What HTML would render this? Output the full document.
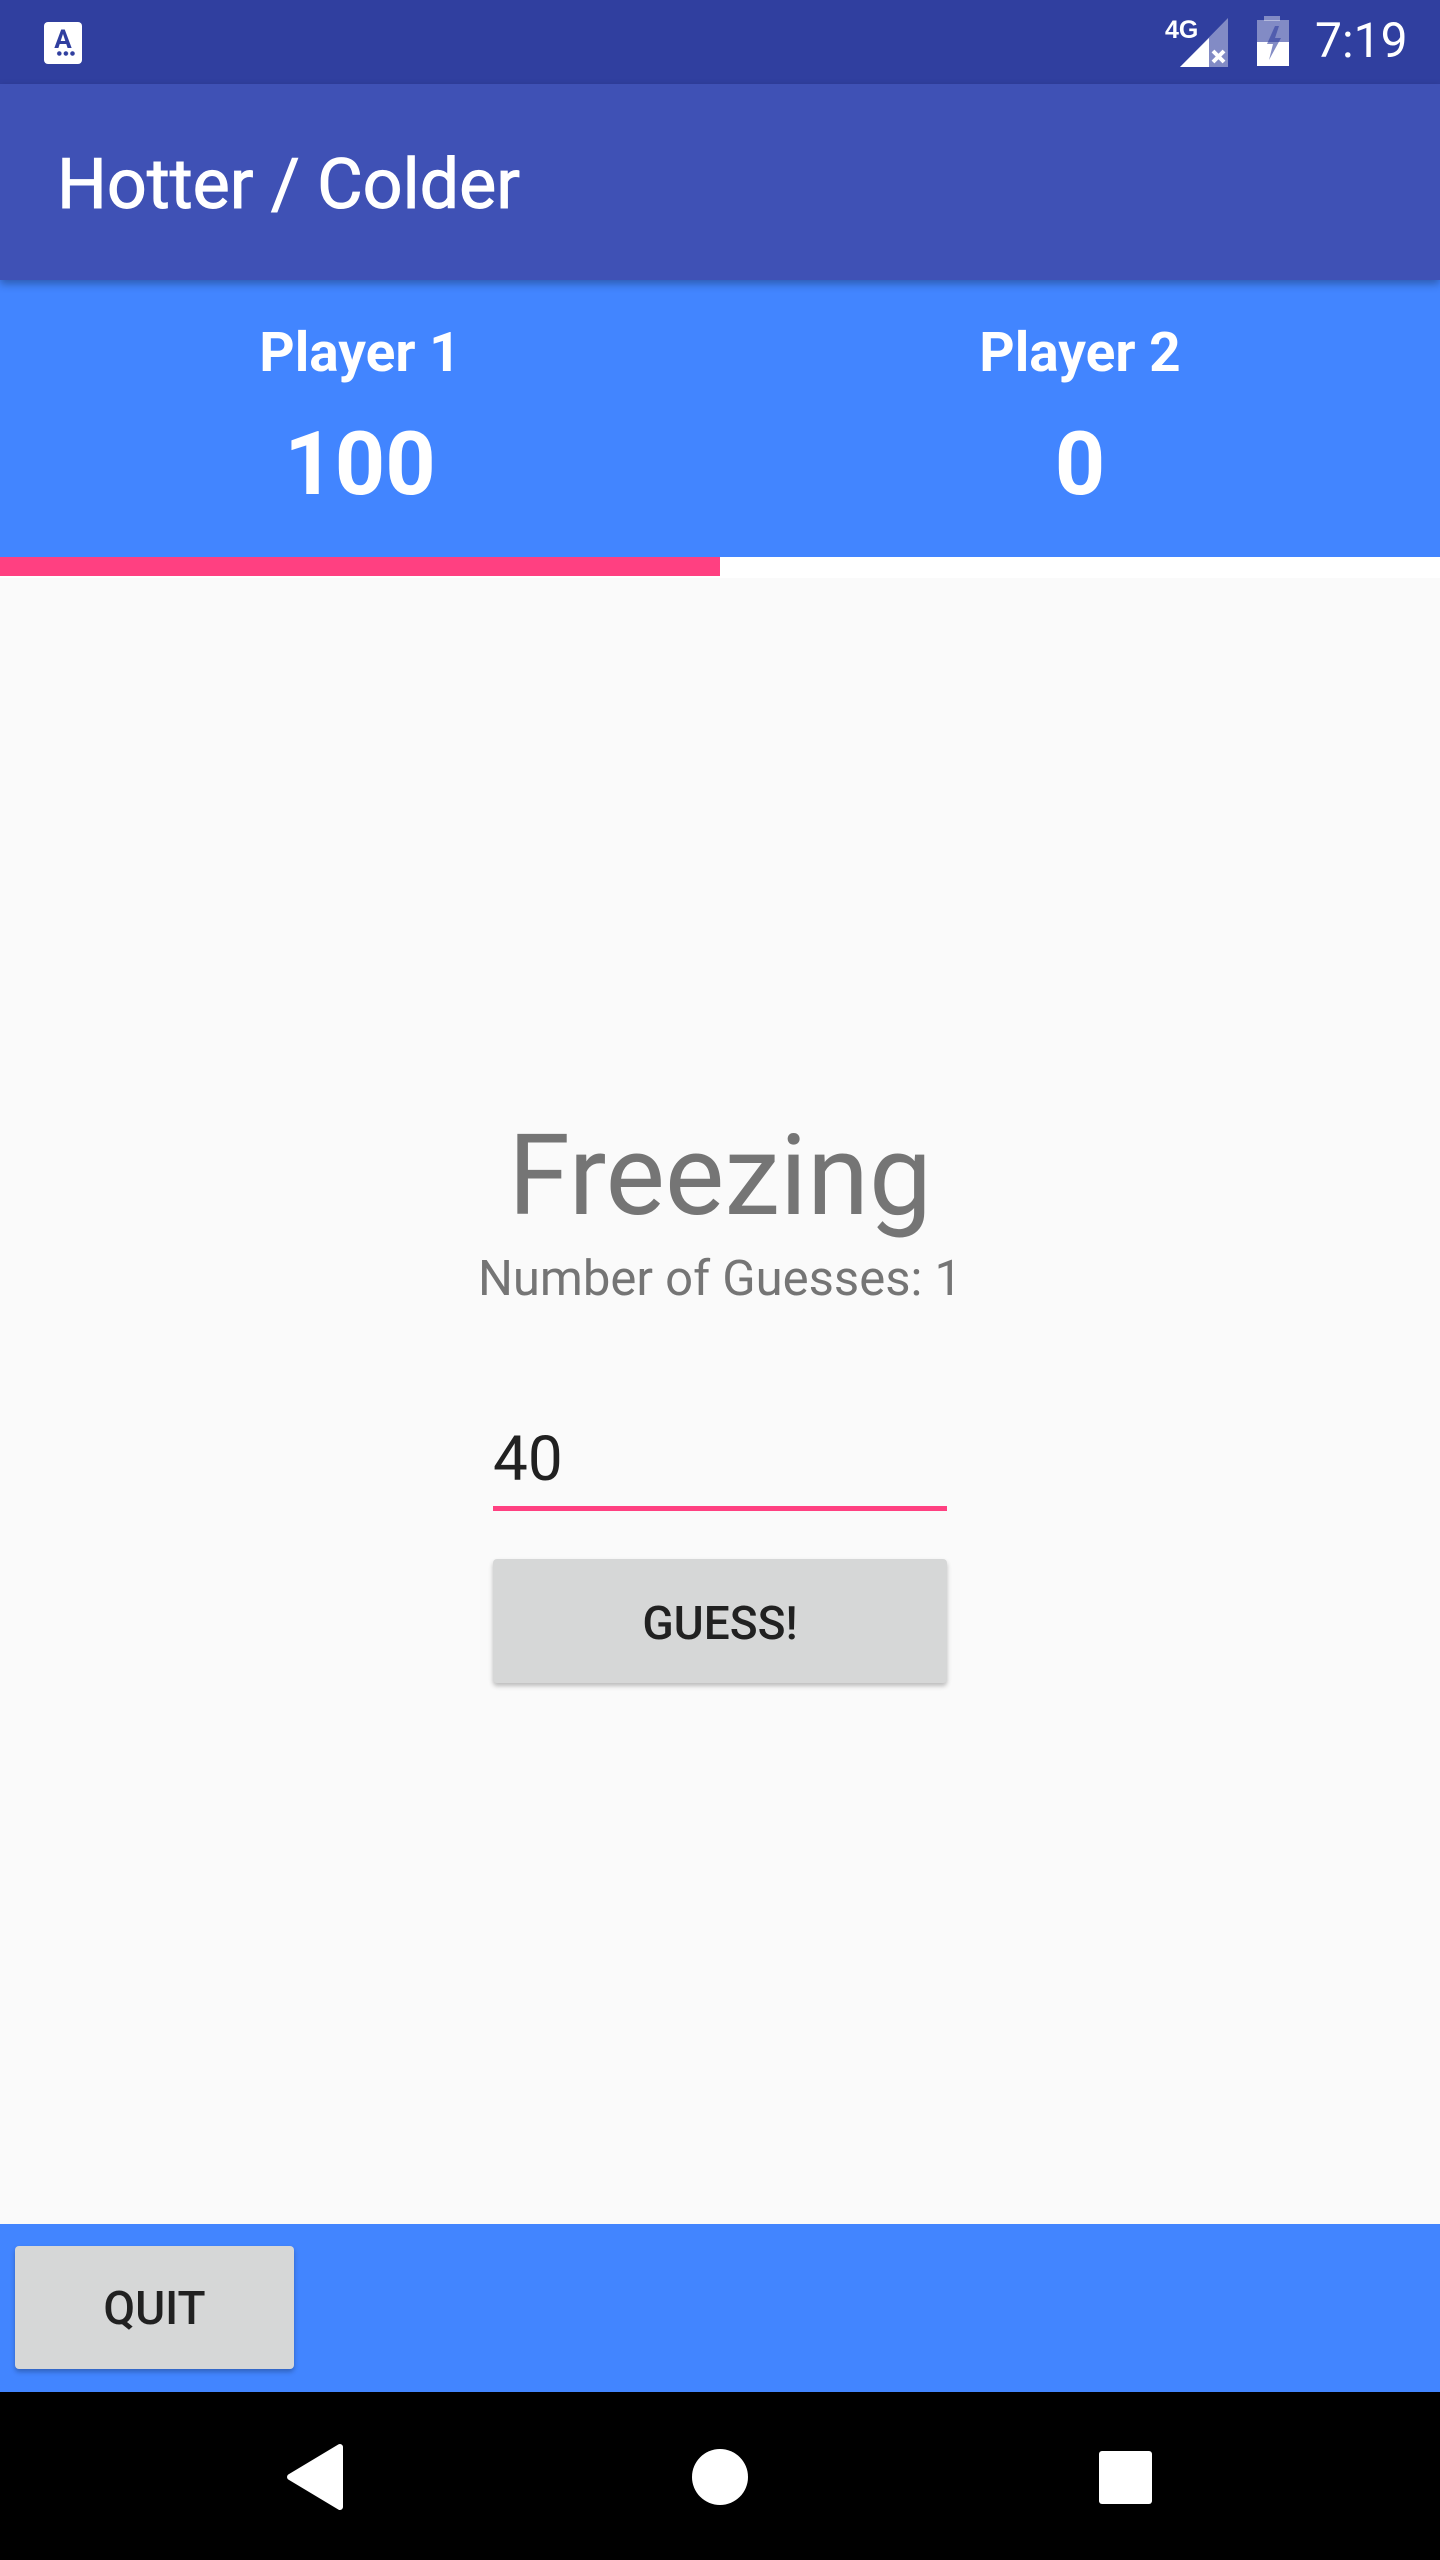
<!DOCTYPE html>
<html><head><meta charset="utf-8"><style>
*{margin:0;padding:0;box-sizing:border-box}
body{width:1440px;height:2560px;position:relative;background:#fafafa;font-family:"Roboto","Liberation Sans",sans-serif;overflow:hidden}
div{position:absolute}
.c{text-align:center;white-space:nowrap}
</style></head><body>
<div style="left:0;top:0;width:1440px;height:84px;background:#303f9f"></div>
<div style="left:44px;top:22px;width:38px;height:42px;background:#fff;border-radius:4px"></div>
<div style="left:44px;top:22px;width:38px;height:34px;color:#303f9f;font-weight:bold;font-size:26px;text-align:center;line-height:36px">A</div>
<div style="left:56px;top:51px;width:20px;height:5px;background:radial-gradient(circle,#303f9f 2px,transparent 2.5px) 0 0/6.6px 5px repeat-x"></div>
<svg style="position:absolute;left:1160px;top:10px" width="90" height="70" viewBox="1160 10 90 70">
<text x="1165" y="38" fill="#fff" font-family="Liberation Sans" font-weight="bold" font-size="25">4G</text>
<polygon points="1180,67 1228,67 1228,18" fill="#fff" opacity="0.4"/>
<polygon points="1180,67 1209,67 1209,38" fill="#fff"/>
<path d="M1213 51 L1224 62 M1224 51 L1213 62" stroke="#fff" stroke-width="4"/>
</svg>
<svg style="position:absolute;left:1255px;top:14px" width="38" height="54" viewBox="0 0 38 54">
<rect x="9" y="2" width="16" height="5" fill="#fff" opacity="0.4"/>
<rect x="2" y="6" width="32" height="22" fill="#fff" opacity="0.4"/>
<rect x="2" y="28" width="32" height="24" fill="#fff"/>
<polygon points="20,12 12,30 18,30 14,46 26,24 20,24 24,12" fill="#303f9f" opacity="0.6"/>
</svg>
<div style="left:1315px;top:12px;color:#fff;font-size:48px;line-height:58px">7:19</div>
<div style="left:0;top:84px;width:1440px;height:196px;background:#3f51b5;box-shadow:0 4px 8px rgba(0,0,0,0.3);z-index:2"></div>
<div style="left:57px;top:140px;color:#fff;font-size:70px;line-height:90px;z-index:3;-webkit-text-stroke:1px #fff">Hotter / Colder</div>
<div style="left:0;top:280px;width:1440px;height:297px;background:#4285ff"></div>
<div class="c" style="left:0;top:320px;width:720px;color:#fff;font-weight:bold;font-size:55px;line-height:66px">Player 1</div>
<div class="c" style="left:720px;top:320px;width:720px;color:#fff;font-weight:bold;font-size:55px;line-height:66px">Player 2</div>
<div class="c" style="left:0;top:410px;width:720px;color:#fff;font-weight:bold;font-size:88px;line-height:110px">100</div>
<div class="c" style="left:720px;top:410px;width:720px;color:#fff;font-weight:bold;font-size:88px;line-height:110px">0</div>
<div style="left:0;top:557px;width:1440px;height:21px;background:#fff"></div>
<div style="left:0;top:557px;width:720px;height:19px;background:#ff4081"></div>
<div class="c" style="left:0;top:1112px;width:1440px;color:#757575;font-size:112px;line-height:130px">Freezing</div>
<div class="c" style="left:0;top:1244px;width:1440px;color:#757575;font-size:49px;line-height:70px">Number of Guesses: 1</div>
<div style="left:493px;top:1420px;color:#212121;font-size:62px;line-height:80px">40</div>
<div style="left:493px;top:1506px;width:454px;height:5px;background:#ff4081"></div>
<div class="c" style="left:493px;top:1559px;width:454px;height:124px;background:#d6d7d7;border-radius:4px;box-shadow:0 3px 5px rgba(0,0,0,0.25);color:#212121;font-weight:500;font-size:46px;line-height:130px">GUESS!</div>
<div style="left:0;top:2224px;width:1440px;height:168px;background:#4285ff"></div>
<div class="c" style="left:15px;top:2246px;width:279px;height:123px;background:#d6d7d7;border-radius:4px;box-shadow:0 3px 5px rgba(0,0,0,0.25);color:#212121;font-weight:500;font-size:46px;line-height:127px">QUIT</div>
<div style="left:0;top:2392px;width:1440px;height:168px;background:#000"></div>
<svg style="position:absolute;left:0;top:2392px" width="1440" height="168">
<polygon points="340,55 340,115 290,85" fill="#fff" stroke="#fff" stroke-width="6" stroke-linejoin="round"/>
<circle cx="720" cy="85" r="28" fill="#fff"/>
<rect x="1099" y="59" width="53" height="53" rx="3" fill="#fff"/>
</svg>
</body></html>
